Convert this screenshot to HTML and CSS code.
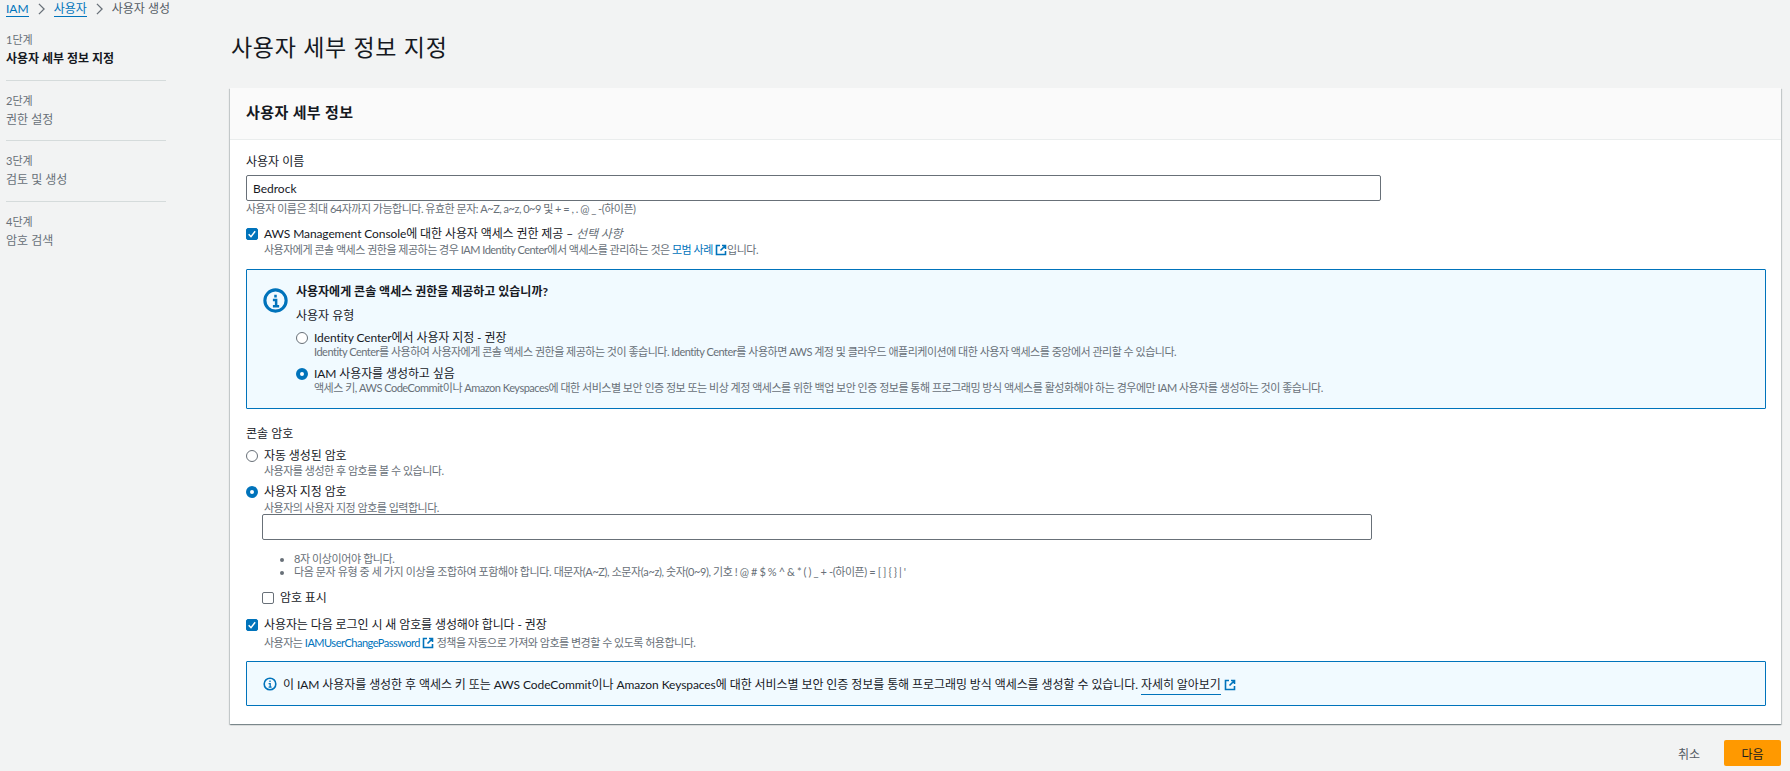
FILE: index.html
```html
<!DOCTYPE html>
<html lang="ko">
<head>
  <meta charset="UTF-8">
  <title>사용자 생성</title>
  <link rel="stylesheet" href="styles.css">
</head>
<body>
  <div class="breadcrumb">
    <a href="#">IAM</a>
    <svg class="crumb-sep" viewBox="0 0 10 14"><path d="M2 1l6 6-6 6"/></svg>
    <a href="#">사용자</a>
    <svg class="crumb-sep" viewBox="0 0 10 14"><path d="M2 1l6 6-6 6"/></svg>
    <span>사용자 생성</span>
  </div>

  <div class="layout">
    <nav class="steps">
      <div class="step">
        <small>1단계</small>
        <div class="step-name current">사용자 세부 정보 지정</div>
      </div>
      <div class="step">
        <small>2단계</small>
        <div class="step-name">권한 설정</div>
      </div>
      <div class="step">
        <small>3단계</small>
        <div class="step-name">검토 및 생성</div>
      </div>
      <div class="step last">
        <small>4단계</small>
        <div class="step-name">암호 검색</div>
      </div>
    </nav>

    <main class="main">
      <h1>사용자 세부 정보 지정</h1>

      <section class="card">
        <h2 class="card-header">사용자 세부 정보</h2>
        <div class="card-body">
          <div class="label">사용자 이름</div>
          <input class="text-input" type="text" value="Bedrock">
          <div class="hint">사용자 이름은 최대 64자까지 가능합니다. 유효한 문자: A~Z, a~z, 0~9 및 + = , . @ _ -(하이픈)</div>

          <div class="option console-opt">
            <span class="check on"><svg viewBox="0 0 12 12"><path d="M2 6.2l2.8 3 5-6.4"/></svg></span>
            <div>
              <div class="opt-title">AWS Management Console에 대한 사용자 액세스 권한 제공 – <i>선택 사항</i></div>
              <div class="hint tight">사용자에게 콘솔 액세스 권한을 제공하는 경우 IAM Identity Center에서 액세스를 관리하는 것은 <a href="#">모범 사례</a>
                <svg class="ext" viewBox="0 0 12 12"><path d="M5 1.5H1.5v9h9V7M7 1.5h3.5V5M10.5 1.5L5.5 6.5"/></svg>입니다.</div>
            </div>
          </div>

          <div class="info-box big">
            <svg class="info-icon" viewBox="0 0 24 24">
              <circle cx="12" cy="12" r="10.2"/>
              <path class="i-mark" d="M12 6.5v2.6M9.5 11.5H12.6V17M9.5 17.5h6"/>
            </svg>
            <div class="info-main">
              <div class="info-title">사용자에게 콘솔 액세스 권한을 제공하고 있습니까?</div>
              <div class="label type-label">사용자 유형</div>
              <div class="option">
                <span class="radio"></span>
                <div>
                  <div class="opt-title">Identity Center에서 사용자 지정 - 권장</div>
                  <div class="hint tight">Identity Center를 사용하여 사용자에게 콘솔 액세스 권한을 제공하는 것이 좋습니다. Identity Center를 사용하면 AWS 계정 및 클라우드 애플리케이션에 대한 사용자 액세스를 중앙에서 관리할 수 있습니다.</div>
                </div>
              </div>
              <div class="option">
                <span class="radio on"></span>
                <div>
                  <div class="opt-title">IAM 사용자를 생성하고 싶음</div>
                  <div class="hint tight">액세스 키, AWS CodeCommit이나 Amazon Keyspaces에 대한 서비스별 보안 인증 정보 또는 비상 계정 액세스를 위한 백업 보안 인증 정보를 통해 프로그래밍 방식 액세스를 활성화해야 하는 경우에만 IAM 사용자를 생성하는 것이 좋습니다.</div>
                </div>
              </div>
            </div>
          </div>

          <div class="label pw-label">콘솔 암호</div>
          <div class="option auto-opt">
            <span class="radio"></span>
            <div>
              <div class="opt-title">자동 생성된 암호</div>
              <div class="hint tight">사용자를 생성한 후 암호를 볼 수 있습니다.</div>
            </div>
          </div>
          <div class="option custom-opt">
            <span class="radio on"></span>
            <div class="grow">
              <div class="opt-title">사용자 지정 암호</div>
              <div class="hint tight">사용자의 사용자 지정 암호를 입력합니다.</div>
            </div>
          </div>
          <div class="pw-block">
            <input class="text-input pw-input" type="text">
            <ul class="rules">
              <li>8자 이상이어야 합니다.</li>
              <li>다음 문자 유형 중 세 가지 이상을 조합하여 포함해야 합니다. 대문자(A~Z), 소문자(a~z), 숫자(0~9), 기호 ! @ # $ % ^ &amp; * ( ) _ + -(하이픈) = [ ] { } | '</li>
            </ul>
            <div class="option show-pw">
              <span class="check"></span>
              <div class="opt-title">암호 표시</div>
            </div>
          </div>

          <div class="option reset-opt">
            <span class="check on"><svg viewBox="0 0 12 12"><path d="M2 6.2l2.8 3 5-6.4"/></svg></span>
            <div>
              <div class="opt-title">사용자는 다음 로그인 시 새 암호를 생성해야 합니다 - 권장</div>
              <div class="hint tight reset-hint">사용자는 <a href="#">IAMUserChangePassword</a>
                <svg class="ext" viewBox="0 0 12 12"><path d="M5 1.5H1.5v9h9V7M7 1.5h3.5V5M10.5 1.5L5.5 6.5"/></svg> 정책을 자동으로 가져와 암호를 변경할 수 있도록 허용합니다.</div>
            </div>
          </div>

          <div class="info-box small">
            <svg class="info-icon mini" viewBox="0 0 14 14">
              <circle cx="7" cy="7" r="5.8"/>
              <path class="i-mark" d="M7 3.6v1.4M5.6 6.6H7.2V10M5.6 10.2h3"/>
            </svg>
            <span class="info-text">이 IAM 사용자를 생성한 후 액세스 키 또는 AWS CodeCommit이나 Amazon Keyspaces에 대한 서비스별 보안 인증 정보를 통해 프로그래밍 방식 액세스를 생성할 수 있습니다. <a class="learn" href="#">자세히 알아보기</a>
              <svg class="ext" viewBox="0 0 12 12"><path d="M5 1.5H1.5v9h9V7M7 1.5h3.5V5M10.5 1.5L5.5 6.5"/></svg></span>
          </div>
        </div>
      </section>

      <div class="actions">
        <button class="btn-cancel">취소</button>
        <button class="btn-next">다음</button>
      </div>
    </main>
  </div>
</body>
</html>
```

FILE: styles.css
```css
:root {
  --bg-color: #f2f3f3;
  --text-color: #16191f;
  --muted: #687078;
  --blue: #0073bb;
  --line: #d5dbdb;
  --info-bg: #f1faff;
}
* {
  box-sizing: border-box;
  margin: 0;
  padding: 0;
}
body {
  font-family: Lato, "Noto Sans CJK KR", sans-serif;
  font-size: 12px;
  background: var(--bg-color);
  color: var(--text-color);
  height: 771px;
  overflow: hidden;
}
a {
  color: var(--blue);
  text-decoration: none;
}

.breadcrumb {
  display: flex;
  align-items: center;
  gap: 8px;
  height: 17px;
  padding-left: 6px;
  font-size: 12px;
  line-height: 15px;
  color: #545b64;
}
.breadcrumb a {
  border-bottom: 1px solid var(--blue);
}
.crumb-sep {
  width: 9px;
  height: 12px;
  fill: none;
  stroke: #687078;
  stroke-width: 1.5;
}

.layout {
  display: flex;
}
.steps {
  width: 160px;
  margin-left: 6px;
  padding-top: 13px;
  flex-shrink: 0;
}
.step {
  height: 50.5px;
  border-bottom: 1px solid var(--line);
  margin-bottom: 10px;
  line-height: 19px;
}
.step.last {
  border-bottom: none;
}
.step small {
  display: block;
  font-size: 11px;
  color: var(--muted);
}
.step-name {
  color: var(--muted);
}
.step-name.current {
  color: var(--text-color);
  font-weight: 700;
}

.main {
  margin-left: 64px;
  width: 1551px;
}
h1 {
  font-size: 23px;
  font-weight: 400;
  line-height: 32px;
  margin-top: 14px;
  padding-left: 1px;
  letter-spacing: 0.7px;
}
.card {
  margin-top: 25px;
  background: #fff;
  height: 636px;
  box-shadow: 0 1px 1px 0 rgba(0,28,36,0.3), 1px 1px 1px 0 rgba(0,28,36,0.15), -1px 1px 1px 0 rgba(0,28,36,0.15);
}
.card-header {
  height: 52px;
  padding-left: 16px;
  font-size: 15px;
  font-weight: 700;
  line-height: 48px;
  letter-spacing: 0.4px;
  background: #fafafa;
  border-bottom: 1px solid #eaeded;
}
.card-body {
  padding: 13px 15px 0 16px;
}
.label {
  font-size: 12px;
  line-height: 18px;
}
.text-input {
  display: block;
  width: 1135px;
  height: 26px;
  margin-top: 4px;
  padding: 0 6px;
  font: inherit;
  color: var(--text-color);
  border: 1px solid #687078;
  border-radius: 2px;
  background: #fff;
}
.hint {
  font-size: 11px;
  line-height: 16px;
  letter-spacing: -0.5px;
  color: var(--muted);
}
.hint.tight {
  line-height: 13px;
  margin-top: 1px;
}

.option {
  display: flex;
  gap: 6px;
}
.opt-title {
  font-size: 12px;
  line-height: 14px;
  letter-spacing: -0.1px;
}
.opt-title i {
  color: var(--muted);
}
.grow {
  flex: 1;
}
.check {
  flex-shrink: 0;
  width: 12px;
  height: 12px;
  margin-top: 1px;
  border: 1px solid #687078;
  border-radius: 2px;
}
.check.on {
  background: var(--blue);
  border-color: var(--blue);
}
.check svg {
  display: block;
  width: 10px;
  height: 10px;
  fill: none;
  stroke: #fff;
  stroke-width: 1.8;
}
.radio {
  flex-shrink: 0;
  width: 12px;
  height: 12px;
  margin-top: 1px;
  border: 1px solid #687078;
  border-radius: 50%;
  background: #fff;
}
.radio.on {
  border: 4px solid var(--blue);
}
.ext {
  width: 12px;
  height: 12px;
  vertical-align: -2px;
  fill: none;
  stroke: var(--blue);
  stroke-width: 1.6;
}
.console-opt {
  margin-top: 10px;
}
.console-opt .hint.tight {
  margin-top: 2px;
}

.info-box {
  display: flex;
  background: var(--info-bg);
  border: 1px solid var(--blue);
  border-radius: 1px;
}
.info-box.big {
  height: 140px;
  margin-top: 13px;
  padding: 14px 0 0 16px;
  gap: 8px;
}
.info-icon {
  flex-shrink: 0;
  width: 25px;
  height: 25px;
  margin-top: 4px;
  fill: none;
  stroke: var(--blue);
  stroke-width: 3;
}
.i-mark {
  stroke-width: 2.4;
}
.info-title {
  font-size: 12px;
  font-weight: 700;
  line-height: 16px;
}
.type-label {
  margin-top: 7px;
}
.info-main .option {
  margin-top: 6px;
}
.info-main .hint.tight {
  margin-top: 0;
}
.info-main .option + .option {
  margin-top: 9px;
}
.pw-label {
  margin-top: 16px;
}
.auto-opt {
  margin-top: 6px;
}
.custom-opt {
  margin-top: 8px;
}
.custom-opt .hint.tight {
  margin-top: 2px;
}

.pw-block {
  margin-left: 16px;
}
.pw-input {
  width: 1110px;
  margin-top: 0;
}
.rules {
  margin-top: 12px;
  padding-left: 32px;
  font-size: 11px;
  line-height: 13px;
  letter-spacing: -0.4px;
  color: var(--muted);
}
.show-pw {
  margin-top: 13px;
}
.reset-opt {
  margin-top: 13px;
}
.hint.reset-hint {
  margin-top: 4px;
}

.info-box.small {
  align-items: center;
  height: 45px;
  margin-top: 12px;
  padding-left: 16px;
  gap: 6px;
}
.info-icon.mini {
  width: 14px;
  height: 14px;
  margin-top: 0;
  stroke-width: 1.6;
}
.info-icon.mini .i-mark {
  stroke-width: 1.3;
}
.info-text {
  font-size: 12px;
  letter-spacing: -0.08px;
}
.learn {
  color: var(--text-color);
  border-bottom: 1px solid var(--blue);
  padding-bottom: 2px;
}

.actions {
  display: flex;
  justify-content: flex-end;
  align-items: center;
  gap: 24px;
  margin-top: 16px;
}
.actions button {
  font: inherit;
  border: none;
  cursor: pointer;
}
.btn-cancel {
  background: none;
  color: #545b64;
  font-weight: 700;
}
.btn-next {
  width: 57px;
  height: 26px;
  background: #ff9900;
  border-radius: 2px;
  color: var(--text-color);
  font-weight: 700;
}
```
